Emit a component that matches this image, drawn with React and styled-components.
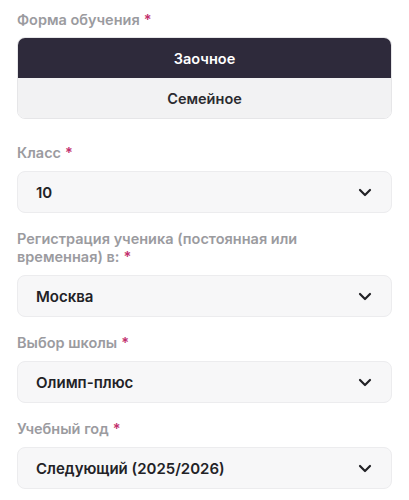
import styled, { createGlobalStyle } from "styled-components";

const GlobalStyle = createGlobalStyle`
  body {
    margin: 0;
    background: #ffffff;
    font-family: "Inter", "Roboto", sans-serif;
  }
`;

// page container
const Form = styled.div`
  padding: 11px 17px 0 17px;
  display: flex;
  flex-direction: column;
  gap: 17px;
`;

const Field = styled.div`
  display: flex;
  flex-direction: column;
  gap: 9px;
  margin-bottom: ${(props) => (props.extra ? "8px" : "0")};
`;

const Label = styled.label`
  color: #9b9b9f;
  font-size: 14.5px;
  font-weight: 600;
  line-height: 18px;
  padding-right: 60px;
`;

const Star = styled.span`
  color: #c2306d;
  margin-left: 4px;
`;

// segmented choice
const Segmented = styled.div`
  margin-top: -1px;
  border: 1px solid #e6e6e8;
  border-radius: 8px;
  overflow: hidden;
  display: flex;
  flex-direction: column;
`;

const Option = styled.div`
  height: 40px;
  display: flex;
  align-items: center;
  justify-content: center;
  font-size: 14.5px;
  font-weight: 600;
  color: ${(props) => (props.active ? "#ffffff" : "#2b2b30")};
  background: ${(props) => (props.active ? "#2e2a3b" : "#f2f2f3")};
`;

const Select = styled.div`
  box-sizing: border-box;
  height: 42px;
  border: 1px solid #ececee;
  border-radius: 8px;
  background: #f7f7f8;
  display: flex;
  align-items: center;
  justify-content: space-between;
  padding: 0 19px 0 18px;
  font-size: 15px;
  font-weight: 600;
  color: #222226;
`;

function Chevron() {
  return (
    <svg width="14" height="9" viewBox="0 0 14 9" fill="none">
      <path
        d="M2 2l5 5 5-5"
        stroke="#222226"
        strokeWidth="2.2"
        strokeLinecap="round"
        strokeLinejoin="round"
      />
    </svg>
  );
}

function SelectField({ label, value }) {
  return (
    <Field>
      <Label>
        {label}
        <Star>*</Star>
      </Label>
      <Select>
        <span>{value}</span>
        <Chevron />
      </Select>
    </Field>
  );
}

export default function App() {
  return (
    <>
      <GlobalStyle />
      <Form>
        <Field extra>
          <Label>
            Форма обучения
            <Star>*</Star>
          </Label>
          <Segmented>
            <Option active>Заочное</Option>
            <Option>Семейное</Option>
          </Segmented>
        </Field>
        <SelectField label="Класс" value="10" />
        <SelectField
          label="Регистрация ученика (постоянная или временная) в:"
          value="Москва"
        />
        <SelectField label="Выбор школы" value="Олимп-плюс" />
        <SelectField label="Учебный год" value="Следующий (2025/2026)" />
      </Form>
    </>
  );
}
